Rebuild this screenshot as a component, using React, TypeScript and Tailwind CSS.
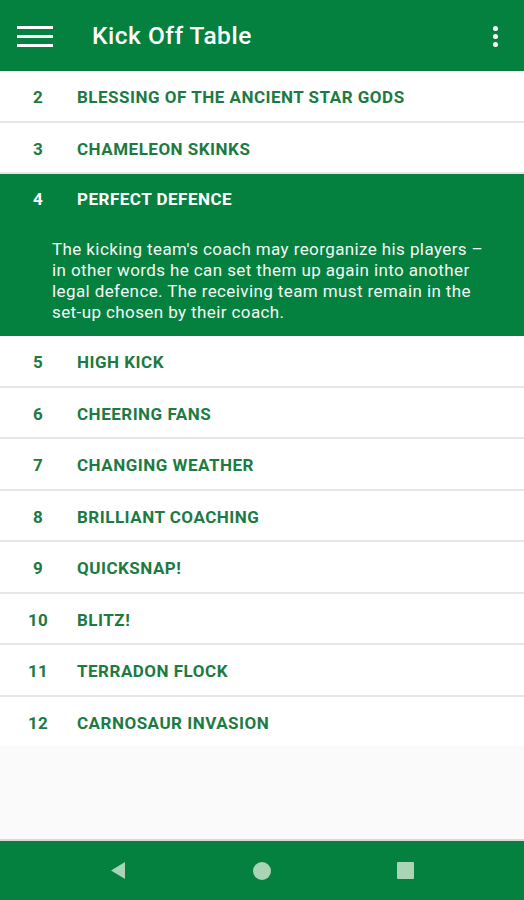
const items = [
  { n: 2, title: "Blessing of the Ancient Star Gods" },
  { n: 3, title: "Chameleon Skinks" },
  {
    n: 4,
    title: "Perfect Defence",
    text: "The kicking team's coach may reorganize his players – in other words he can set them up again into another legal defence. The receiving team must remain in the set-up chosen by their coach.",
  },
  { n: 5, title: "High Kick" },
  { n: 6, title: "Cheering Fans" },
  { n: 7, title: "Changing Weather" },
  { n: 8, title: "Brilliant Coaching" },
  { n: 9, title: "Quicksnap!" },
  { n: 10, title: "Blitz!" },
  { n: 11, title: "Terradon Flock" },
  { n: 12, title: "Carnosaur Invasion" },
];

function Row({ n, title, text }: { n: number; title: string; text?: string }) {
  const open = !!text;
  return (
    <div
      className={
        open
          ? "bg-[#04813f] text-white"
          : "bg-white text-[#1c7a42] border-b-2 border-[#e6e6e6] last:border-b-0"
      }
    >
      <div className={open ? "flex items-center h-[51px]" : "flex items-center h-[49.5px] pt-[4px]"}>
        <span className="w-[77px] text-center pr-[1px] text-[17px] font-bold tracking-[0.3px]">{n}</span>
        <span className="text-[17px] font-bold uppercase tracking-[0.5px]">{title}</span>
      </div>
      {open && (
        <p className="pl-[52px] pr-[36px] pt-[14px] pb-[13px] text-[17px] leading-[21px] tracking-[0.4px] text-[#f4f8f5]">
          {text}
        </p>
      )}
    </div>
  );
}

export default function App() {
  return (
    <div
      className="w-[524px] h-[900px] flex flex-col bg-[#fafafa] overflow-hidden"
      style={{ fontFamily: "Roboto, 'Liberation Sans', sans-serif" }}
    >
      <div className="h-[71px] bg-[#04813f] flex items-center shrink-0 border-b-2 border-[#0c7a3c] pt-[3px]">
        <div className="w-[92px] pl-[17px] flex flex-col gap-[6px]">
          <div className="w-[36px] h-[3px] bg-white" />
          <div className="w-[36px] h-[3px] bg-white" />
          <div className="w-[36px] h-[3px] bg-white" />
        </div>
        <span className="text-white text-[24.5px] font-medium tracking-[0.5px]">Kick Off Table</span>
        <div className="ml-auto mr-[26px] flex flex-col gap-[3px]">
          <div className="w-[5px] h-[5px] rounded-full bg-white" />
          <div className="w-[5px] h-[5px] rounded-full bg-white" />
          <div className="w-[5px] h-[5px] rounded-full bg-white" />
        </div>
      </div>

      <div className="bg-white">
        {items.map((it) => (
          <Row key={it.n} {...it} />
        ))}
      </div>

      <div className="flex-1" />

      <div className="h-[61px] bg-[#04813f] flex items-center shrink-0 border-t-2 border-[#d8d8d8]">
        <div className="w-full flex items-center">
          <div className="w-[233px] flex justify-end pr-[107px]">
            <svg width="16" height="19" viewBox="0 0 16 19">
              <path d="M15 1 L1 9.5 L15 18 Z" fill="#a9d4b6" />
            </svg>
          </div>
          <div className="w-[58px] flex justify-center">
            <div className="w-[18px] h-[18px] rounded-full bg-[#a9d4b6]" />
          </div>
          <div className="flex-1 pl-[106px]">
            <div className="w-[17px] h-[17px] rounded-[1px] bg-[#a9d4b6]" />
          </div>
        </div>
      </div>
    </div>
  );
}
